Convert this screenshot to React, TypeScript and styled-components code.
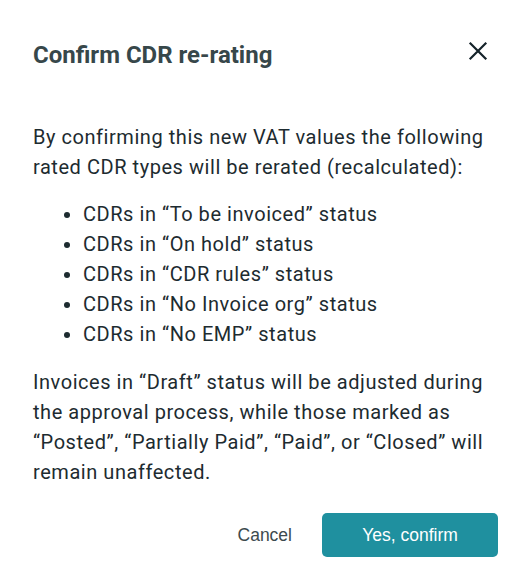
import React from 'react';
import styled, { createGlobalStyle } from 'styled-components';

const GlobalStyle = createGlobalStyle`
  html, body {
    margin: 0;
    padding: 0;
    background: #ffffff;
  }
  body {
    font-family: Roboto, 'Noto Sans', sans-serif;
  }
`;

const Dialog = styled.div`
  width: 531px;
  height: 578px;
  box-sizing: border-box;
  padding: 36px 33px 0 33px;
  background: #ffffff;
  display: flex;
  flex-direction: column;
`;

const Header = styled.div`
  display: flex;
  align-items: center;
  justify-content: space-between;
  height: 34px;
`;

const Title = styled.h2`
  margin: 3px 0 0 0;
  font-family: Roboto, sans-serif;
  font-weight: 700;
  font-size: 24px;
  color: #37474a;
`;

const CloseButton = styled.button`
  border: none;
  background: none;
  padding: 0;
  margin: 0 7px 4px 0;
  width: 26px;
  height: 26px;
  display: flex;
  align-items: center;
  justify-content: center;
  cursor: pointer;
`;

const Body = styled.div`
  margin-top: 52px;
  font-family: Roboto, sans-serif;
  font-size: 20px;
  letter-spacing: 0.55px;
  line-height: 30px;
  color: #1d2b30;
`;

const Paragraph = styled.p`
  margin: 0;
`;

const List = styled.ul`
  margin: 17px 0 18px 0;
  padding-left: 50px;
  li {
    padding-left: 0;
  }
`;

const Footer = styled.div`
  display: flex;
  justify-content: flex-end;
  align-items: center;
  gap: 30px;
  margin-top: 26px;
`;

const TextButton = styled.button`
  border: none;
  background: none;
  font-family: 'Liberation Sans', Arial, sans-serif;
  font-size: 17.5px;
  color: #3c4a4e;
  padding: 0;
  cursor: pointer;
`;

const PrimaryButton = styled.button`
  width: 176px;
  height: 44px;
  border: none;
  border-radius: 5px;
  background: #1f909f;
  color: #ffffff;
  font-family: 'Liberation Sans', Arial, sans-serif;
  font-size: 17.5px;
  cursor: pointer;
`;

const statuses = ['To be invoiced', 'On hold', 'CDR rules', 'No Invoice org', 'No EMP'];

export default function App() {
  return (
    <>
      <GlobalStyle />
      <Dialog>
        <Header>
          <Title>Confirm CDR re-rating</Title>
          <CloseButton aria-label="Close">
            <svg width="20" height="20" viewBox="0 0 20 20" fill="none" stroke="#15232a" strokeWidth="2.2" strokeLinecap="square">
              <path d="M2.5 2.5L17.5 17.5M17.5 2.5L2.5 17.5" />
            </svg>
          </CloseButton>
        </Header>
        <Body>
          <Paragraph>
            By confirming this new VAT values the following rated CDR types will be rerated (recalculated):
          </Paragraph>
          <List>
            {statuses.map(s => (
              <li key={s}>CDRs in “{s}” status</li>
            ))}
          </List>
          <Paragraph>
            Invoices in “Draft” status will be adjusted during the approval process, while those marked as
            “Posted”, “Partially Paid”, “Paid”, or “Closed” will remain unaffected.
          </Paragraph>
        </Body>
        <Footer>
          <TextButton>Cancel</TextButton>
          <PrimaryButton>Yes, confirm</PrimaryButton>
        </Footer>
      </Dialog>
    </>
  );
}
